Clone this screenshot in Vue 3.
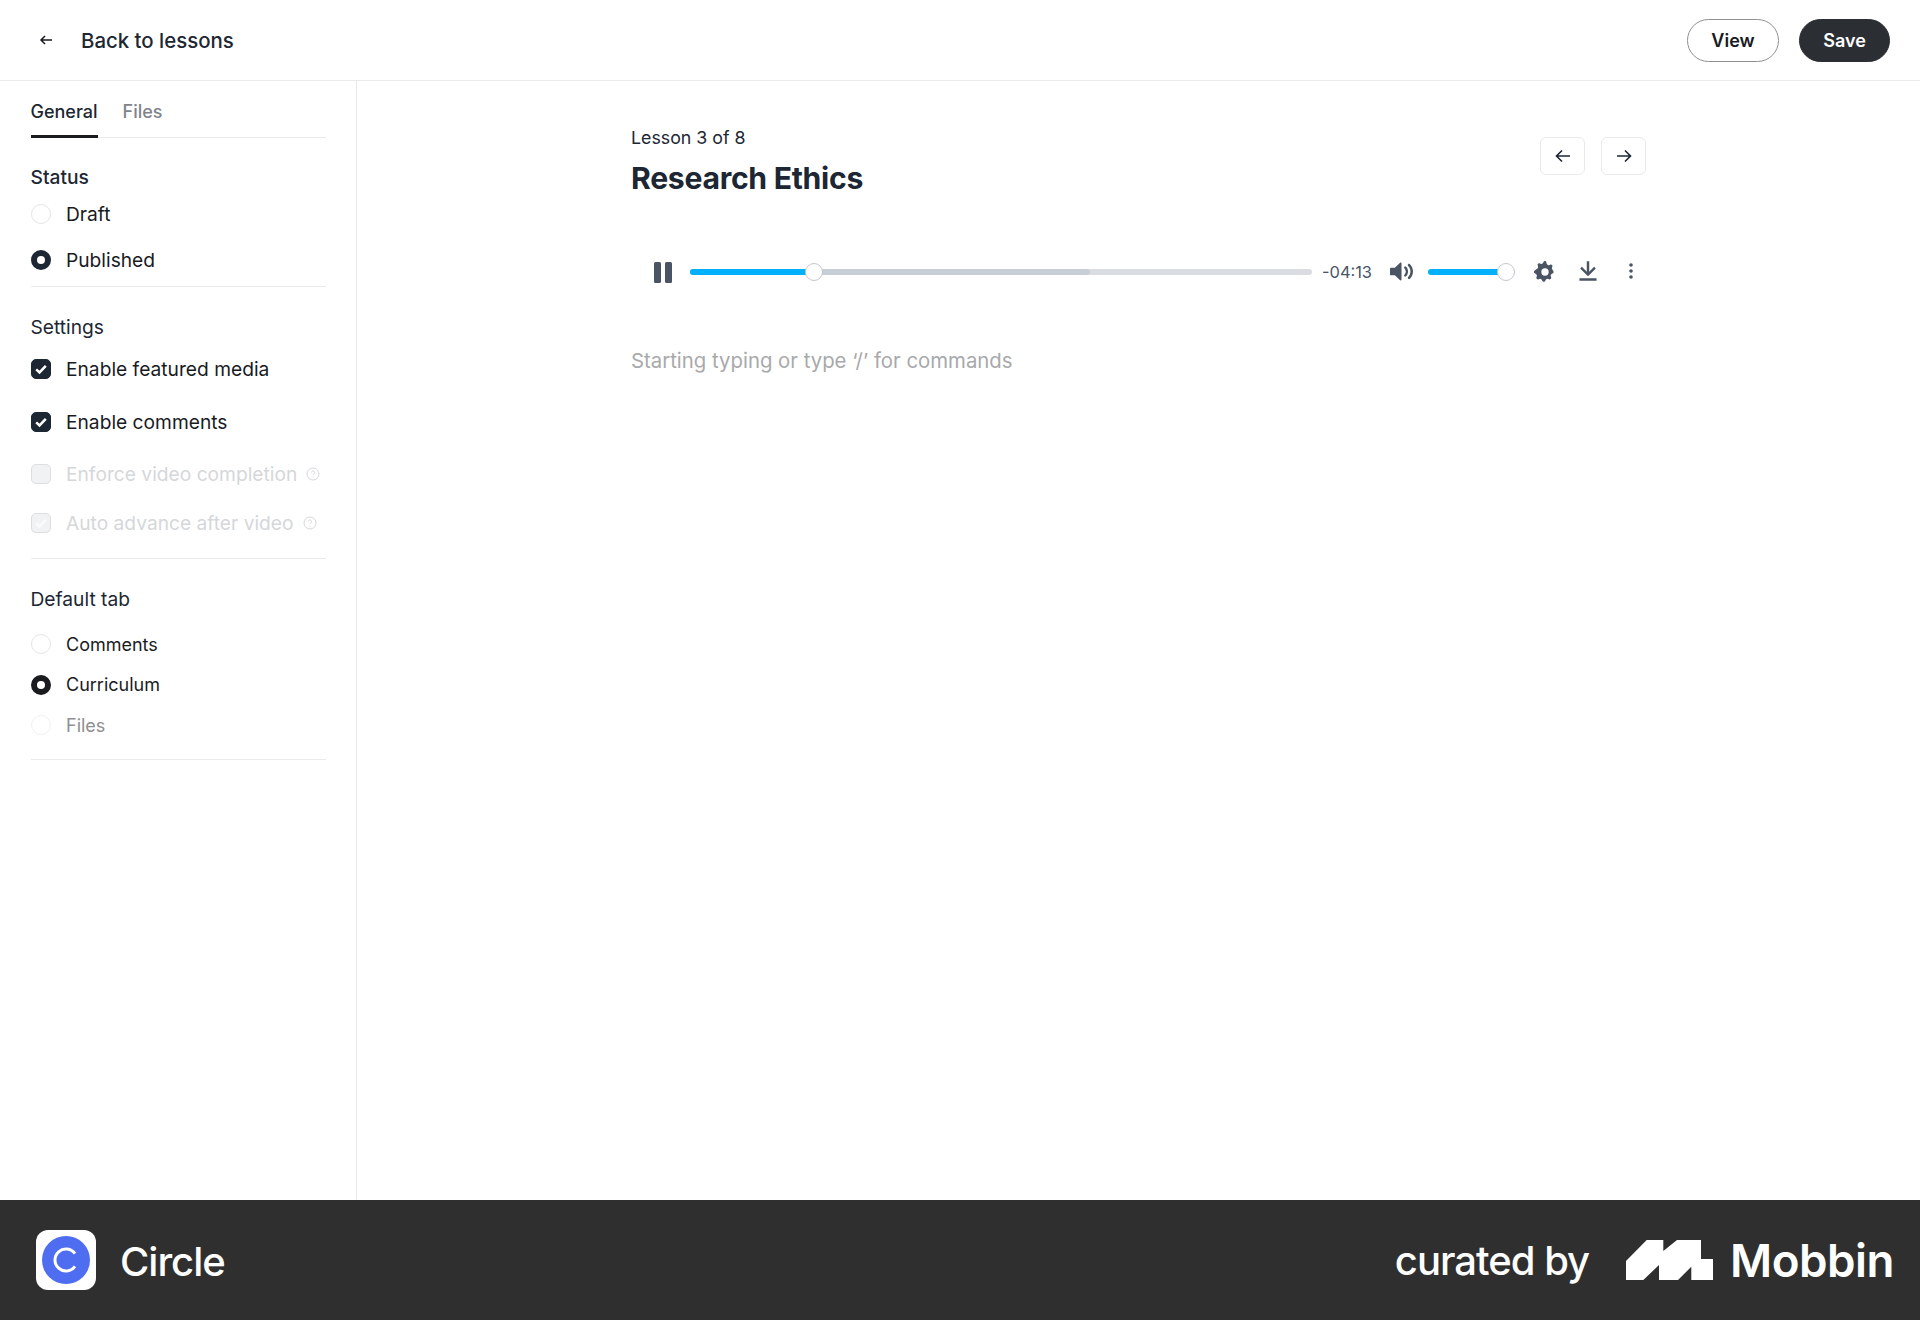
<script setup>
const statusOptions = [
  { label: 'Draft', checked: false },
  { label: 'Published', checked: true },
]
const tabOptions = [
  { label: 'Comments', checked: false },
  { label: 'Curriculum', checked: true },
  { label: 'Files', checked: false, muted: true },
]
</script>

<template>
  <div class="page">
    <header class="topbar">
      <div class="back">
        <svg class="back-icon" width="16" height="16" viewBox="0 0 16 16" fill="none"><path d="M14 8H3M7 4 3 8l4 4" stroke="#191b1f" stroke-width="1.5"/></svg>
        <span>Back to lessons</span>
      </div>
      <div class="actions">
        <button class="btn btn-view">View</button>
        <button class="btn btn-save">Save</button>
      </div>
    </header>

    <div class="body">
      <aside class="sidebar">
        <div class="tabs">
          <span class="tab active">General</span>
          <span class="tab">Files</span>
        </div>

        <section class="group group-status">
          <h3 class="heading strong">Status</h3>
          <label v-for="o in statusOptions" :key="o.label" class="opt opt-status">
            <span class="radio" :class="{ on: o.checked }"></span>
            <span>{{ o.label }}</span>
          </label>
        </section>

        <section class="group group-settings">
          <h3 class="heading">Settings</h3>
          <label class="opt opt-check first">
            <span class="check on"><svg width="16" height="16" viewBox="0 0 16 16" fill="none"><path d="M3.200 8.400 6.500 11.400 12.800 4.800" stroke="#fff" stroke-width="2.500"/></svg></span>
            <span>Enable featured media</span>
          </label>
          <label class="opt opt-check">
            <span class="check on"><svg width="16" height="16" viewBox="0 0 16 16" fill="none"><path d="M3.200 8.400 6.500 11.400 12.800 4.800" stroke="#fff" stroke-width="2.500"/></svg></span>
            <span>Enable comments</span>
          </label>
          <label class="opt opt-check disabled">
            <span class="check"></span>
            <span>Enforce video completion</span>
            <svg class="help" width="14" height="14" viewBox="0 0 14 14" fill="none"><circle cx="7" cy="7" r="6" stroke="#d5d7da"/><path d="M5.400 5.600a1.600 1.600 0 1 1 2.500 1.300c-.6.4-.9.7-.9 1.300" stroke="#d5d7da"/><circle cx="7" cy="10" r=".6" fill="#d5d7da"/></svg>
          </label>
          <label class="opt opt-check disabled short">
            <span class="check"><svg width="16" height="16" viewBox="0 0 16 16" fill="none"><path d="M3.200 8.400 6.500 11.400 12.800 4.800" stroke="#fbfbfc" stroke-width="2.500"/></svg></span>
            <span>Auto advance after video</span>
            <svg class="help" width="14" height="14" viewBox="0 0 14 14" fill="none"><circle cx="7" cy="7" r="6" stroke="#d5d7da"/><path d="M5.400 5.600a1.600 1.600 0 1 1 2.500 1.300c-.6.4-.9.7-.9 1.300" stroke="#d5d7da"/><circle cx="7" cy="10" r=".6" fill="#d5d7da"/></svg>
          </label>
        </section>

        <section class="group group-tab">
          <h3 class="heading">Default tab</h3>
          <label v-for="o in tabOptions" :key="o.label" class="opt opt-tab" :class="{ muted: o.muted }">
            <span class="radio" :class="{ on: o.checked, dark: o.checked }"></span>
            <span>{{ o.label }}</span>
          </label>
        </section>
      </aside>

      <main class="main">
        <div class="lesson">
          <div class="lesson-head">
            <div>
              <div class="lesson-count">Lesson 3 of 8</div>
              <h1 class="lesson-title">Research Ethics</h1>
            </div>
            <div class="nav">
              <button class="nav-btn"><svg width="18" height="18" viewBox="0 0 18 18" fill="none"><path d="M16 9H2.500M8 3.500 2.500 9 8 14.500" stroke="#1c2733" stroke-width="1.600"/></svg></button>
              <button class="nav-btn"><svg width="18" height="18" viewBox="0 0 18 18" fill="none"><path d="M2 9h13.500M10 3.500 15.500 9 10 14.500" stroke="#1c2733" stroke-width="1.600"/></svg></button>
            </div>
          </div>

          <div class="player">
            <svg class="pause" width="18" height="21" viewBox="0 0 18 21"><rect x="0" y="0" width="7" height="21" rx="1.500" fill="#4a5464"/><rect x="11" y="0" width="7" height="21" rx="1.500" fill="#4a5464"/></svg>
            <div class="track progress">
              <div class="buffered"></div>
              <div class="played"></div>
              <div class="thumb"></div>
            </div>
            <span class="time">-04:13</span>
            <svg class="volume" width="23" height="23" viewBox="0 0 18 18" fill="#4a5464"><path d="M15.600 3.300c-.4-.4-1-.4-1.400 0-.4.4-.4 1 0 1.400C15.400 5.900 16 7.400 16 9c0 1.600-.6 3.100-1.800 4.300-.4.4-.4 1 0 1.400.2.2.5.3.7.3.3 0 .5-.1.7-.3C17.100 13.200 18 11.200 18 9s-.9-4.200-2.400-5.700z"/><path d="M11.300 5.300a.9.9 0 0 0 0 1.300c.7.700 1 1.500 1 2.400 0 .9-.4 1.900-1 2.500a.9.9 0 0 0 0 1.300c.2.100.6.300 1 .2a.7.700 0 0 0 .3-.2C13.800 11.700 14.100 10.200 14.100 9c0-.2 0-.3 0-.5-.1-1-.3-2-1.500-3.200a.9.9 0 0 0-1.300 0zM3.800 6H.7C.3 6 0 6.300 0 6.800v4.500c0 .4.300.7.700.7h3.100l4.100 3.900c.5.300 1.100 0 1.100-.6V2.800c0-.6-.6-1-1.100-.6L3.800 6z"/></svg>
            <div class="track vol">
              <div class="played"></div>
              <div class="thumb"></div>
            </div>
            <svg class="gear" width="22" height="22" viewBox="0 0 18 18" fill="#4a5464"><path d="M16.135 7.784a2 2 0 0 1-1.230-2.969c.322-.536.225-.998-.094-1.316l-.31-.31c-.318-.318-.780-.415-1.316-.094a2 2 0 0 1-2.969-1.230C10.065.258 9.669 0 9.219 0h-.438c-.45 0-.845.258-.997.865a2 2 0 0 1-2.969 1.230c-.536-.322-.999-.225-1.317.093l-.31.31c-.318.318-.415.781-.093 1.317a2 2 0 0 1-1.230 2.969C.26 7.935 0 8.330 0 8.781v.438c0 .45.258.845.865.997a2 2 0 0 1 1.230 2.969c-.322.536-.225.998.094 1.316l.31.31c.319.319.782.415 1.316.094a2 2 0 0 1 2.969 1.230c.151.607.547.865.997.865h.438c.45 0 .845-.258.997-.865a2 2 0 0 1 2.969-1.230c.535.321.997.225 1.316-.094l.31-.31c.318-.318.415-.781.094-1.316a2 2 0 0 1 1.230-2.969c.607-.151.865-.547.865-.997v-.438c0-.451-.26-.846-.865-.997zM9 12a3 3 0 1 1 0-6 3 3 0 0 1 0 6z"/></svg>
            <svg class="download" width="22" height="22" viewBox="0 0 18 18" fill="#4a5464"><path d="M9 13c.3 0 .5-.1.700-.3L15.400 7 14 5.600l-4 4V1H8v8.600l-4-4L2.600 7l5.700 5.700c.2.200.4.300.700.300zM2 15h14v2H2z"/></svg>
            <svg class="dots" width="4" height="16" viewBox="0 0 4 16"><circle cx="2" cy="2" r="1.800" fill="#4a5464"/><circle cx="2" cy="8" r="1.800" fill="#4a5464"/><circle cx="2" cy="14" r="1.800" fill="#4a5464"/></svg>
          </div>

          <p class="placeholder">Starting typing or type ‘/’ for commands</p>
        </div>
      </main>
    </div>

    <footer class="footer">
      <div class="brand">
        <div class="logo"><div class="logo-disc"><svg width="28" height="28" viewBox="0 0 28 28" fill="none"><path d="M23 7.700A11 11 0 1 0 23 20.300" stroke="#fff" stroke-width="3"/></svg></div></div>
        <span class="brand-name">Circle</span>
      </div>
      <div class="curated">
        <span class="curated-by">curated by</span>
        <svg class="mobbin-mark" width="87" height="40" viewBox="0 0 87 40"><path fill="#fff" d="M0 21 20.700 0H37.300V11L51 0H75V19H87V40H65.300V26.700L52 40H33V25L17.300 40H0z"/></svg>
        <span class="mobbin-name">Mobbin</span>
      </div>
    </footer>
  </div>
</template>

<style>
html, body { margin: 0; background: #fff; }
</style>

<style scoped>
.page {
  width: 1920px;
  height: 1320px;
  display: flex;
  flex-direction: column;
  font-family: Inter, "Noto Sans", sans-serif;
  color: #1c2733;
  overflow: hidden;
}
.topbar {
  height: 80px;
  flex: none;
  display: flex;
  align-items: center;
  justify-content: space-between;
  padding: 0 30px 0 38px;
  border-bottom: 1px solid #e9eaec;
}
.back {
  display: flex;
  align-items: center;
  gap: 27px;
  font-size: 20.400px;
  font-weight: 500;
}
.actions { display: flex; gap: 20px; }
.btn {
  height: 43px;
  border-radius: 22px;
  font-family: inherit;
  font-size: 18px;
  font-weight: 600;
  box-sizing: border-box;
  padding: 0;
}
.btn-view { width: 92px; background: #fff; border: 1.5px solid #8f9093; color: #191b1f; }
.btn-save { width: 91px; background: #2b2e33; border: 1px solid #2b2e33; color: #fff; }

.body { flex: 1; display: flex; min-height: 0; }
.sidebar {
  width: 357px;
  flex: none;
  box-sizing: border-box;
  padding: 0 30px 0 30.500px;
  border-right: 1px solid #e9eaec;
}
.tabs {
  display: flex;
  gap: 25px;
  height: 57px;
  box-sizing: border-box;
  border-bottom: 1px solid #e9eaec;
}
.tab {
  font-size: 18px;
  font-weight: 500;
  color: #7f848b;
  height: 57px;
  line-height: 62px;
  box-sizing: border-box;
}
.tab.active { color: #1c2733; border-bottom: 3px solid #191b1f; }

.group { border-bottom: 1px solid #e9eaec; }
.group-status { height: 149px; box-sizing: border-box; }
.group-settings { height: 272px; box-sizing: border-box; }
.group-tab { height: 201px; box-sizing: border-box; }

.heading { margin: 0; font-size: 19.200px; font-weight: 400; }
.heading.strong { font-weight: 500; }
.group-status .heading { line-height: 22px; padding-top: 28px; }
.group-settings .heading { line-height: 22px; padding-top: 29px; }
.group-tab .heading { line-height: 22px; padding-top: 29px; padding-bottom: 14px; }

.opt { display: flex; align-items: center; color: #191b1f; }
.opt > :first-child { margin-right: 15.500px; }
.opt-status { height: 46px; font-size: 19.200px; }
.group-status .heading + .opt { margin-top: 3px; }
.opt-check { height: 52.500px; font-size: 19.200px; }
.opt-check.first { margin-top: 5px; }
.opt-check.short { height: 44px; }
.opt-tab { height: 40.500px; font-size: 18px; }
.opt.muted { color: #8e8f91; }
.opt.muted .radio { border-color: #f0f1f2; }
.disabled { color: #d5d7da; }
.help { margin-left: 9px; }

.radio {
  width: 20px;
  height: 20px;
  box-sizing: border-box;
  border-radius: 50%;
  border: 1px solid #e4e5e7;
  background: #fff;
  flex: none;
}
.radio.on { border: 6px solid #1c2733; }
.radio.on.dark { border-color: #191b1f; }
.check {
  width: 20px;
  height: 20px;
  box-sizing: border-box;
  border-radius: 5px;
  border: 1px solid #dcdee1;
  background: #f1f2f4;
  flex: none;
  display: flex;
  align-items: center;
  justify-content: center;
}
.check.on { background: #1c2733; border-color: #1c2733; }

.main { flex: 1; min-width: 0; }
.lesson { width: 1015px; margin-left: 274px; }
.lesson-head {
  display: flex;
  justify-content: space-between;
  align-items: flex-start;
  padding-top: 45px;
  height: 150px;
  box-sizing: border-box;
}
.lesson-count { font-size: 17.800px; line-height: 24px; color: #1c2733; }
.lesson-title { margin: 8px 0 0; font-size: 30.200px; line-height: 40px; font-weight: 700; letter-spacing: -0.3px; color: #1c2733; }
.nav { display: flex; gap: 16px; margin-top: 11px; }
.nav-btn {
  width: 45px;
  height: 38px;
  padding: 0;
  border: 1px solid #e9eaec;
  border-radius: 6px;
  background: #fff;
  display: flex;
  align-items: center;
  justify-content: center;
}
.player {
  height: 80px;
  display: flex;
  align-items: center;
  padding-left: 23px;
  position: relative;
  top: 1px;
}
.pause { flex: none; margin-right: 18px; }
.track { position: relative; height: 6px; border-radius: 3px; background: #d9dde2; flex: none; }
.progress { width: 622px; }
.vol { width: 78px; background: transparent; margin-left: 15px; }
.buffered { position: absolute; left: 0; top: 0; bottom: 0; width: 400px; background: #c8ced6; border-radius: 3px; }
.played { position: absolute; left: 0; top: 0; bottom: 0; width: 124px; background: #03b0fb; border-radius: 3px; }
.vol .played { width: 78px; }
.thumb {
  position: absolute;
  left: 124px;
  top: 50%;
  width: 18px;
  height: 18px;
  box-sizing: border-box;
  margin: -9px 0 0 -9px;
  border-radius: 50%;
  background: #fff;
  border: 1px solid #c4c8cd;
}
.vol .thumb { left: 78px; }
.time { font-size: 16.400px; color: #4a5464; margin-left: 10px; width: 51px; flex: none; }
.volume { flex: none; margin-left: 17px; margin-top: -2px; }
.gear { flex: none; margin-left: 28px; margin-top: -1px; }
.download { flex: none; margin-left: 21px; margin-top: -2px; }
.dots { flex: none; margin-left: 30px; margin-top: -2px; }
.placeholder { margin: 0; padding-top: 38px; font-size: 20.350px; line-height: 24px; color: #a8a9ab; }

.footer {
  height: 120px;
  flex: none;
  background: #2f2f2f;
  color: #fff;
  display: flex;
  align-items: center;
  justify-content: space-between;
  padding: 0 26px 0 36px;
}
.brand { display: flex; align-items: center; gap: 24px; }
.logo {
  width: 60px;
  height: 60px;
  border-radius: 12px;
  background: #fff;
  display: flex;
  align-items: center;
  justify-content: center;
}
.logo-disc {
  width: 48px;
  height: 48px;
  border-radius: 50%;
  background: #4f6df0;
  display: flex;
  align-items: center;
  justify-content: center;
}
.brand-name { font-size: 40px; font-weight: 500; letter-spacing: -1px; position: relative; top: 1px; }
.curated { display: flex; align-items: center; }
.curated-by { font-size: 40px; font-weight: 500; letter-spacing: -1px; margin-right: 37px; }
.mobbin-mark { flex: none; margin-right: 17px; }
.mobbin-name { font-size: 45.700px; font-weight: 600; letter-spacing: -0.5px; }
</style>
